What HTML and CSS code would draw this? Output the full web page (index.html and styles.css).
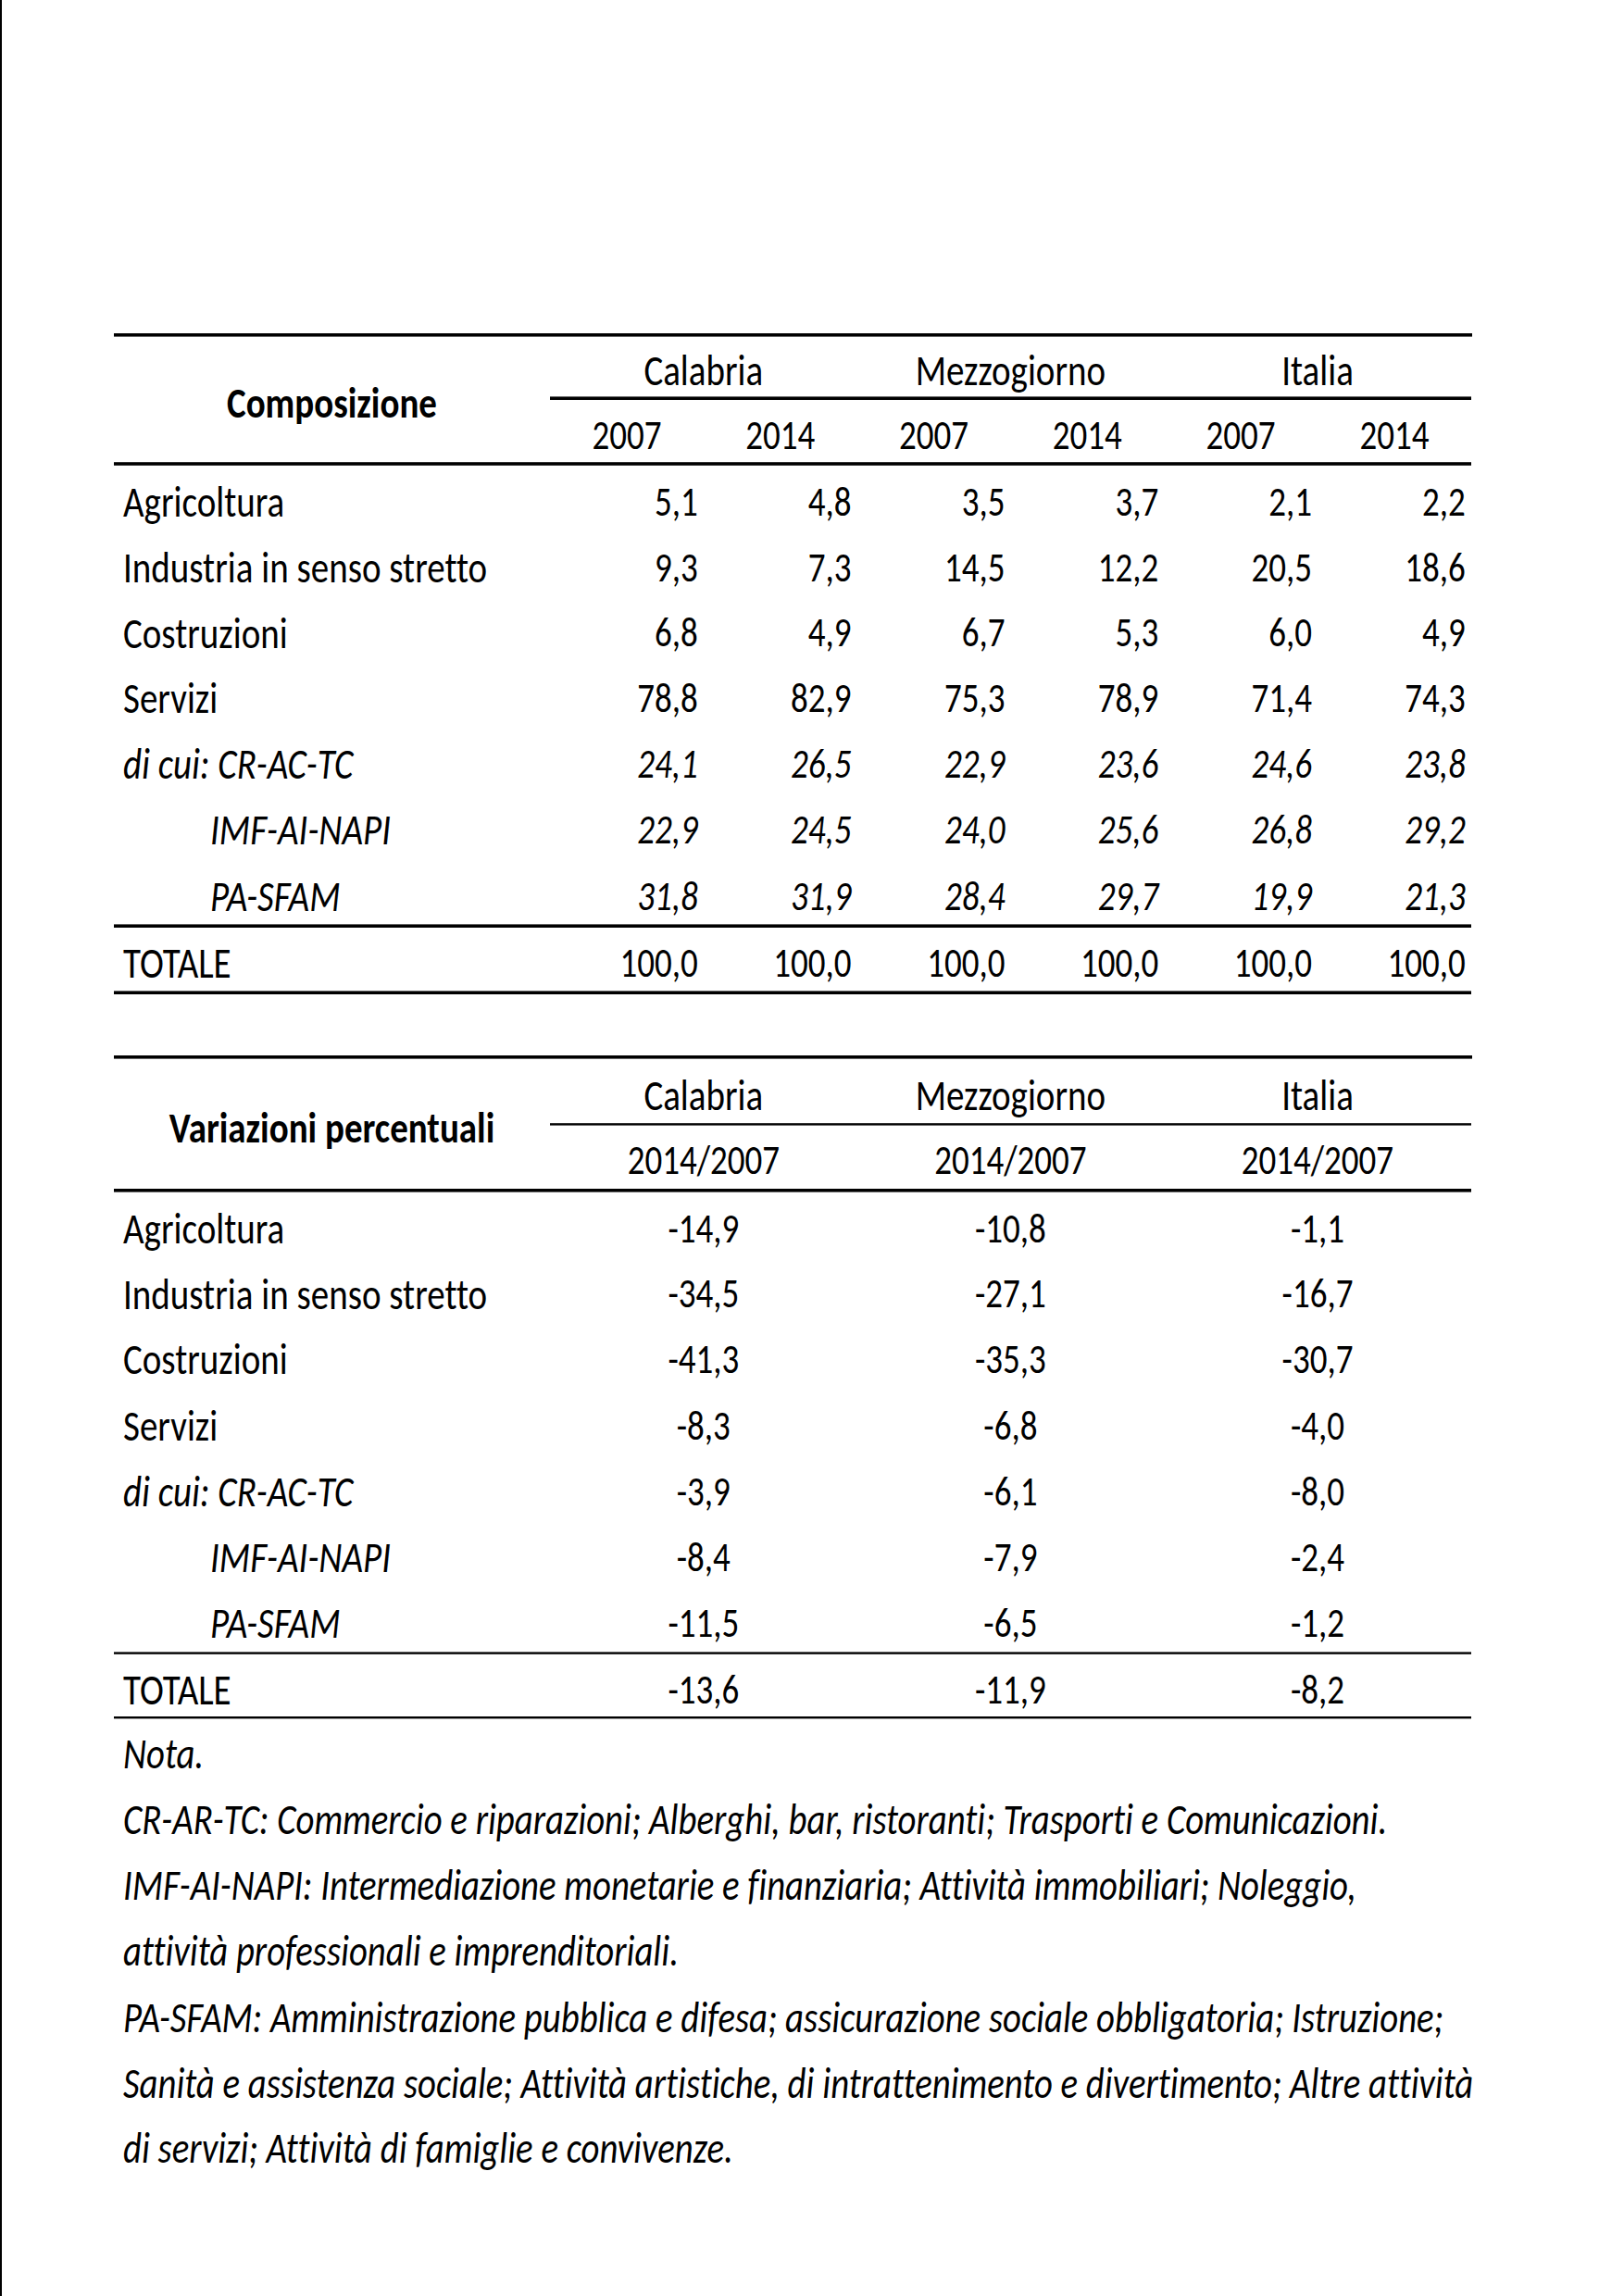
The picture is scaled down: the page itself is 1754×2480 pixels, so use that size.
FILE: index.html
```html
<!DOCTYPE html>
<html lang="it">
<head>
<meta charset="utf-8">
<title>Composizione e variazioni percentuali</title>
<link rel="stylesheet" href="styles.css">
</head>
<body>
<div class="page">
  <div class="doc">
    <div class="t1">
      <div class="c head-label">Composizione</div>
      <div class="c grp">Calabria</div>
      <div class="c grp">Mezzogiorno</div>
      <div class="c grp">Italia</div>
      <div class="c yr">2007</div><div class="c yr">2014</div>
      <div class="c yr">2007</div><div class="c yr">2014</div>
      <div class="c yr">2007</div><div class="c yr">2014</div>

      <div class="c lab">Agricoltura</div>
      <div class="c num">5,1</div><div class="c num">4,8</div><div class="c num">3,5</div><div class="c num">3,7</div><div class="c num">2,1</div><div class="c num">2,2</div>

      <div class="c lab">Industria in senso stretto</div>
      <div class="c num">9,3</div><div class="c num">7,3</div><div class="c num">14,5</div><div class="c num">12,2</div><div class="c num">20,5</div><div class="c num">18,6</div>

      <div class="c lab">Costruzioni</div>
      <div class="c num">6,8</div><div class="c num">4,9</div><div class="c num">6,7</div><div class="c num">5,3</div><div class="c num">6,0</div><div class="c num">4,9</div>

      <div class="c lab">Servizi</div>
      <div class="c num">78,8</div><div class="c num">82,9</div><div class="c num">75,3</div><div class="c num">78,9</div><div class="c num">71,4</div><div class="c num">74,3</div>

      <div class="c lab it">di cui: CR-AC-TC</div>
      <div class="c num it">24,1</div><div class="c num it">26,5</div><div class="c num it">22,9</div><div class="c num it">23,6</div><div class="c num it">24,6</div><div class="c num it">23,8</div>

      <div class="c lab it sub">IMF-AI-NAPI</div>
      <div class="c num it">22,9</div><div class="c num it">24,5</div><div class="c num it">24,0</div><div class="c num it">25,6</div><div class="c num it">26,8</div><div class="c num it">29,2</div>

      <div class="c lab it sub rule">PA-SFAM</div>
      <div class="c num it rule">31,8</div><div class="c num it rule">31,9</div><div class="c num it rule">28,4</div><div class="c num it rule">29,7</div><div class="c num it rule">19,9</div><div class="c num it rule">21,3</div>

      <div class="c lab rule">TOTALE</div>
      <div class="c num rule">100,0</div><div class="c num rule">100,0</div><div class="c num rule">100,0</div><div class="c num rule">100,0</div><div class="c num rule">100,0</div><div class="c num rule">100,0</div>
    </div>

    <div class="t2">
      <div class="c head-label">Variazioni percentuali</div>
      <div class="c grp">Calabria</div>
      <div class="c grp">Mezzogiorno</div>
      <div class="c grp">Italia</div>
      <div class="c yr">2014/2007</div><div class="c yr">2014/2007</div><div class="c yr">2014/2007</div>

      <div class="c lab">Agricoltura</div>
      <div class="c ctr">-14,9</div><div class="c ctr">-10,8</div><div class="c ctr">-1,1</div>

      <div class="c lab">Industria in senso stretto</div>
      <div class="c ctr">-34,5</div><div class="c ctr">-27,1</div><div class="c ctr">-16,7</div>

      <div class="c lab">Costruzioni</div>
      <div class="c ctr">-41,3</div><div class="c ctr">-35,3</div><div class="c ctr">-30,7</div>

      <div class="c lab">Servizi</div>
      <div class="c ctr">-8,3</div><div class="c ctr">-6,8</div><div class="c ctr">-4,0</div>

      <div class="c lab it">di cui: CR-AC-TC</div>
      <div class="c ctr">-3,9</div><div class="c ctr">-6,1</div><div class="c ctr">-8,0</div>

      <div class="c lab it sub">IMF-AI-NAPI</div>
      <div class="c ctr">-8,4</div><div class="c ctr">-7,9</div><div class="c ctr">-2,4</div>

      <div class="c lab it sub thin">PA-SFAM</div>
      <div class="c ctr thin">-11,5</div><div class="c ctr thin">-6,5</div><div class="c ctr thin">-1,2</div>

      <div class="c lab thin">TOTALE</div>
      <div class="c ctr thin">-13,6</div><div class="c ctr thin">-11,9</div><div class="c ctr thin">-8,2</div>
    </div>

    <div class="nota">
      <p>Nota.</p>
      <p>CR-AR-TC: Commercio e riparazioni; Alberghi, bar, ristoranti; Trasporti e Comunicazioni.</p>
      <p>IMF-AI-NAPI: Intermediazione monetarie e finanziaria; Attività immobiliari; Noleggio,<br>attività professionali e imprenditoriali.</p>
      <p>PA-SFAM: Amministrazione pubblica e difesa; assicurazione sociale obbligatoria; Istruzione;<br>Sanità e assistenza sociale; Attività artistiche, di intrattenimento e divertimento; Altre attività<br>di servizi; Attività di famiglie e convivenze.</p>
    </div>
  </div>
</div>
</body>
</html>
```

FILE: styles.css
```css
html, body {
  margin: 0;
  padding: 0;
  background: #fff;
}

.page {
  box-sizing: border-box;
  width: 1754px;
  height: 2480px;
  border-left: 2px solid #000;
  padding: 360px 0 0 121px;
  overflow: hidden;
  font-family: "Carlito", "Calibri", "Lato", sans-serif;
  font-size: 39px;
  font-variant-ligatures: none;
  color: #000;
}

.doc {
  width: 1467px;
  transform: scaleY(1.2);
  transform-origin: 0 0;
}

.c {
  display: flex;
  align-items: center;
  box-sizing: border-box;
  white-space: nowrap;
  line-height: 1;
  padding-top: 7px;
}

.t1 {
  display: grid;
  grid-template-columns: 471px repeat(6, 165.8px);
  grid-template-rows: 56.7px 59.2px repeat(6, 59px) 62.5px 59.2px;
  border-top: 3.5px solid #000;
}

.t2 {
  display: grid;
  grid-template-columns: 471px repeat(3, 331.6px);
  grid-template-rows: 60.4px 59.75px repeat(6, 59.1px) 61.6px 57.9px;
  border-top: 3.5px solid #000;
  margin-top: 55px;
}

.head-label {
  grid-row: 1 / 3;
  justify-content: center;
  font-weight: bold;
  border-bottom: 3.5px solid #000;
}

.t1 .grp {
  grid-column: span 2;
  justify-content: center;
  border-bottom: 3.5px solid #000;
}

.t2 .grp {
  justify-content: center;
  border-bottom: 2.5px solid #000;
}

.yr {
  justify-content: center;
  font-size: 37px;
  border-bottom: 3.5px solid #000;
}

.lab {
  padding-left: 10px;
}

.lab.sub {
  padding-left: 104px;
}

.num {
  justify-content: flex-end;
  padding-right: 6px;
  font-size: 37px;
}

.ctr {
  justify-content: center;
  font-size: 37px;
}

.it {
  font-style: italic;
}

.rule {
  border-bottom: 3.5px solid #000;
}

.thin {
  border-bottom: 2.5px solid #000;
}

.nota {
  padding-left: 10px;
  padding-top: 2px;
  font-style: italic;
  font-size: 38.8px;
  line-height: 59.2px;
  white-space: nowrap;
}

.nota p {
  margin: 0;
}
```
